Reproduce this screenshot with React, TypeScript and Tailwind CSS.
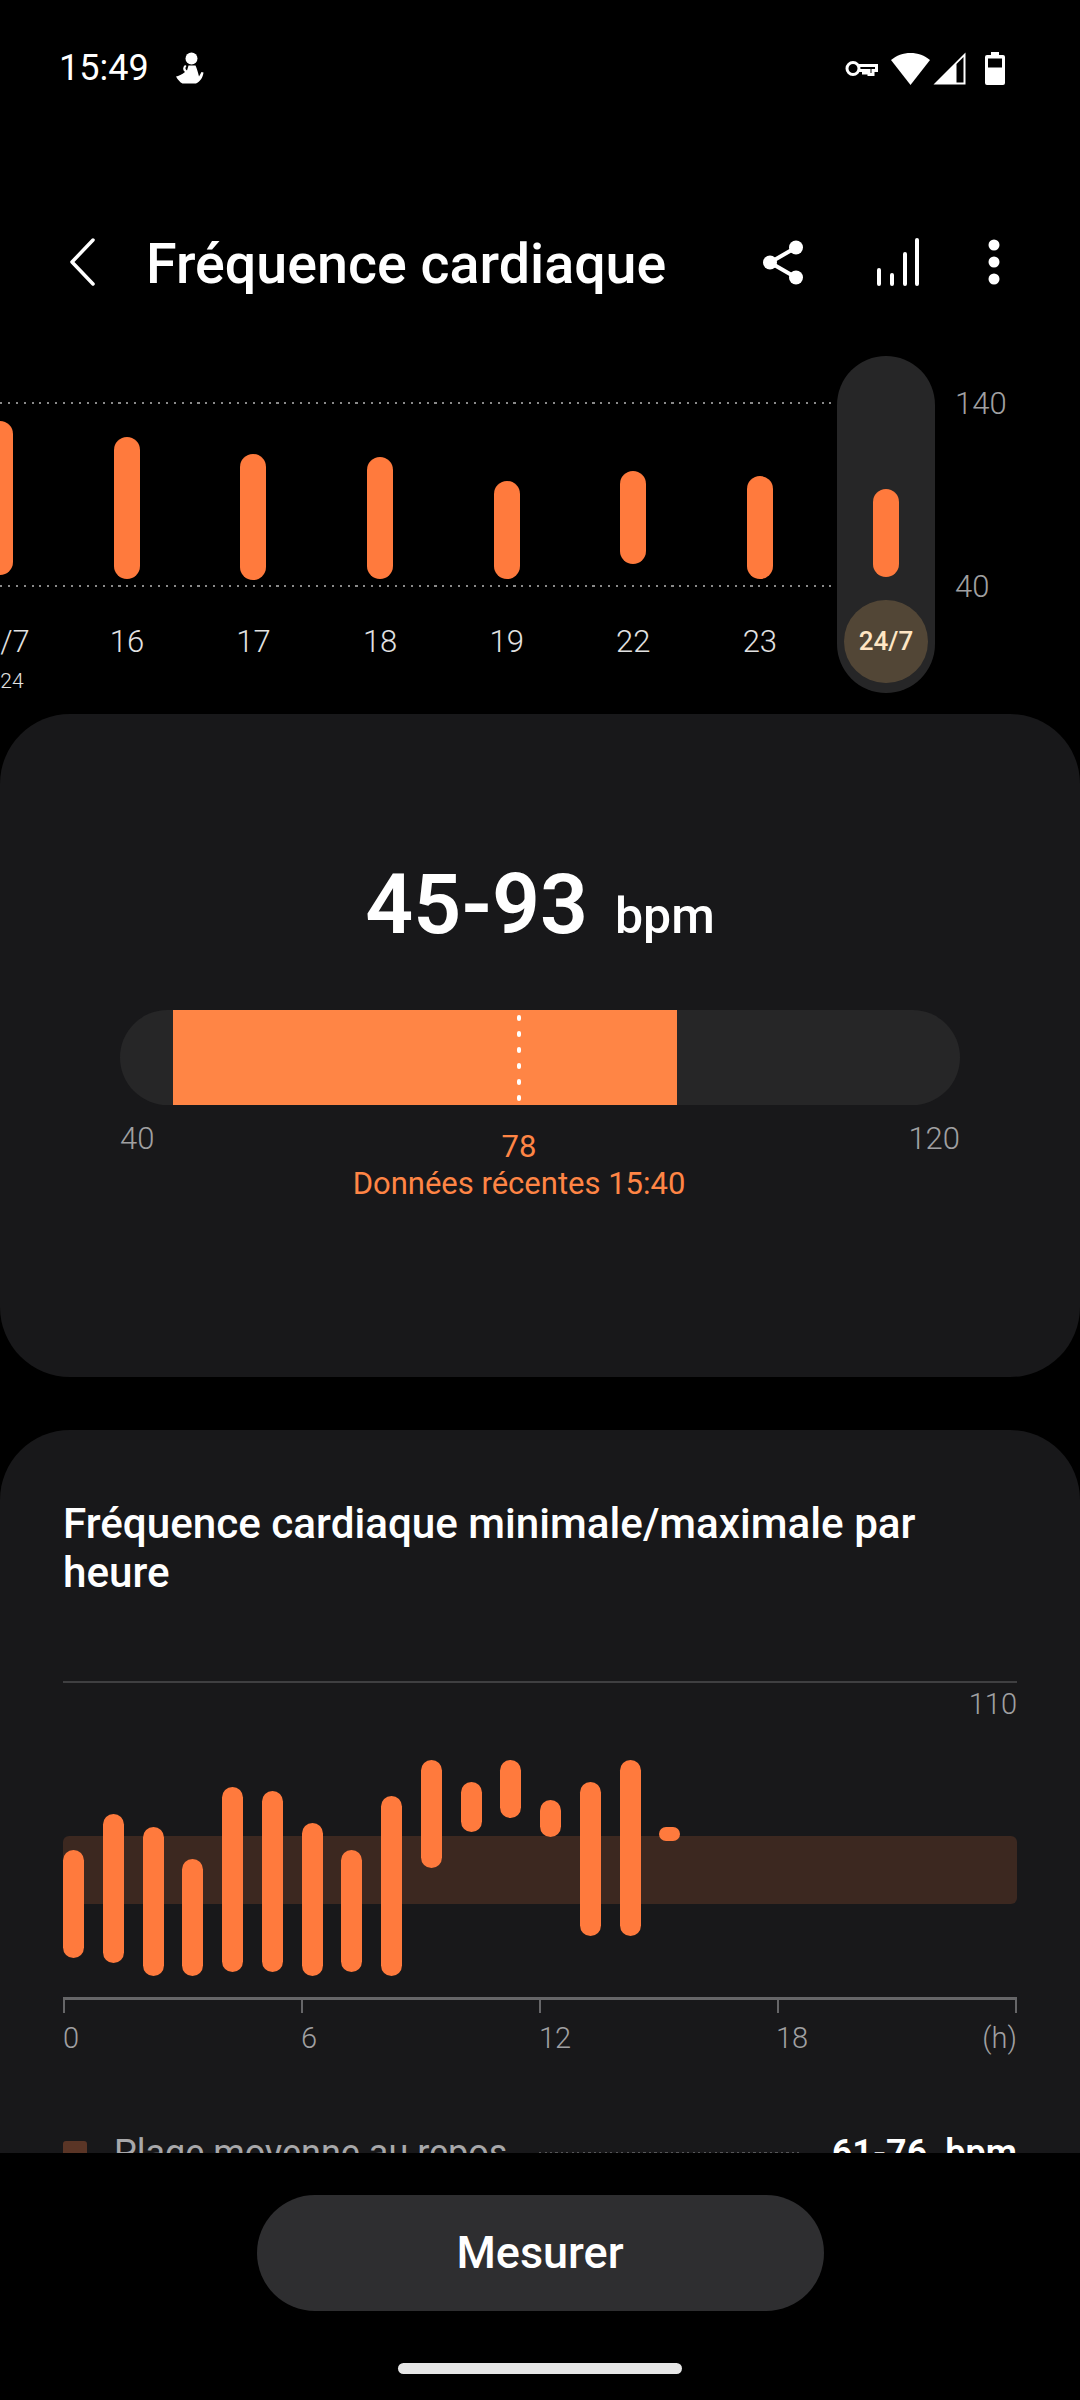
const DAY_BARS = [
  { label: "15/7", sub: "2024", top: 421, bottom: 575 },
  { label: "16", top: 437, bottom: 579 },
  { label: "17", top: 454, bottom: 580 },
  { label: "18", top: 457, bottom: 579 },
  { label: "19", top: 481, bottom: 579 },
  { label: "22", top: 471, bottom: 564 },
  { label: "23", top: 476, bottom: 579 },
  { label: "24/7", top: 489, bottom: 577, active: true },
];

const HOUR_BARS = [
  [1850, 1958],
  [1814, 1963],
  [1827, 1976],
  [1859, 1976],
  [1787, 1972],
  [1791, 1972],
  [1823, 1976],
  [1850, 1972],
  [1796, 1976],
  [1760, 1868],
  [1782, 1832],
  [1760, 1818],
  [1800, 1837],
  [1782, 1936],
  [1760, 1936],
  [1827, 1841],
];

const DAY_CHART_TOP = 356;
const HOUR_CHART_TOP = 1683;

function PersonIcon() {
  return (
    <svg width="28" height="32" viewBox="0 0 28 32" fill="white">
      <circle cx="15.500" cy="6.500" r="6" />
      <path d="M12.500 13.500h7c1.500 3 2.500 7 3.500 11l2.500-4.500 2 .5c-.5 5-3.500 9-7.500 11H6.500c-2.500-1.200-4.500-3.500-6.500-7 2.500-.5 6-2 9-4.500-2.500-2-2.500-4.500 0-7l1.500 1c-1.500 1.500-1.500 3 .5 4.500z" />
    </svg>
  );
}

function KeyIcon() {
  return (
    <svg width="33" height="17" viewBox="0 0 33 17" fill="none" stroke="white" strokeWidth="3">
      <circle cx="8" cy="8.500" r="6" />
      <path d="M14 5.500h17.500v5h-3.500v4h-4v-4h-2.500v2.500h-3v-2.500h-4.500" />
    </svg>
  );
}

function StatusIcons() {
  return (
    <div className="flex items-center">
      <KeyIcon />
      <svg className="ml-[13px]" width="39" height="32" viewBox="0 0 39 32" fill="white">
        <path d="M19.500 0C12 0 5.500 2.500 0 7l19.500 25L39 7C33.500 2.500 27 0 19.500 0z" />
      </svg>
      <svg className="ml-[3px]" width="33" height="33" viewBox="0 0 33 33" fill="none">
        <path d="M32.500 0.500V32.500H0.500z" fill="white" />
        <path d="M23.500 12 30.500 5V30.500H23.500z" fill="black" />
      </svg>
      <svg className="ml-[19px]" width="20" height="33" viewBox="0 0 20 33" fill="white">
        <path d="M6 0h8v3h4a2 2 0 0 1 2 2v26a2 2 0 0 1-2 2H2a2 2 0 0 1-2-2V5a2 2 0 0 1 2-2h4z" />
        <path d="M3 6.500h14v9H3z" fill="black" />
      </svg>
    </div>
  );
}

function HeaderIcons() {
  return (
    <div className="flex items-center">
      <svg width="42" height="45" viewBox="0 0 42 45" fill="white" stroke="white">
        <path d="M35 7.500 9 22.500l26 15" fill="none" strokeWidth="4" />
        <circle cx="35" cy="7.500" r="7" strokeWidth="0" />
        <circle cx="9" cy="22.500" r="7" strokeWidth="0" />
        <circle cx="35" cy="37.500" r="7" strokeWidth="0" />
      </svg>
      <svg className="ml-[73px]" width="44" height="48" viewBox="0 0 44 48" fill="none" stroke="white" strokeWidth="4" strokeLinecap="round">
        <path d="M3 46V32M16 46V37M29 46V16M41 46V2" />
      </svg>
      <svg className="ml-[68px]" width="12" height="46" viewBox="0 0 12 46" fill="white">
        <circle cx="6" cy="6" r="5.500" />
        <circle cx="6" cy="23" r="5.500" />
        <circle cx="6" cy="40" r="5.500" />
      </svg>
    </div>
  );
}

function DayChart() {
  return (
    <div className="relative h-[337px] shrink-0">
      <div className="absolute left-0 top-[46px] h-[2px] w-[837px] bg-[repeating-linear-gradient(90deg,#8a8a8a_0,#8a8a8a_2px,transparent_2px,transparent_7.900px)]" />
      <div className="absolute left-0 top-[229px] h-[2px] w-[837px] bg-[repeating-linear-gradient(90deg,#8a8a8a_0,#8a8a8a_2px,transparent_2px,transparent_7.900px)]" />
      <div className="absolute left-[837px] top-0 flex h-[337px] w-[98px] items-end justify-center rounded-full bg-[#262627] pb-[10px]">
        <div className="flex h-[83px] w-[84px] items-center justify-center rounded-full bg-[#524636] text-[26px] font-medium text-[#ffe6c4]">
          24/7
        </div>
      </div>
      <span className="absolute left-[955px] top-[29px] text-[31px] font-light leading-[38px] text-[#a0a0a2]">140</span>
      <span className="absolute left-[955px] top-[212px] text-[31px] font-light leading-[38px] text-[#a0a0a2]">40</span>
      <div className="relative -ml-[63px] flex w-[1076px]">
        {DAY_BARS.map((bar) => (
          <div key={bar.label} className="flex w-[126.600px] shrink-0 flex-col items-center">
            <div className="h-[267px] w-full">
              <div
                className="mx-auto w-[26px] rounded-full bg-[#ff7a3d]"
                style={{ marginTop: bar.top - DAY_CHART_TOP, height: bar.bottom - bar.top }}
              />
            </div>
            {bar.active ? null : (
              <span className={`whitespace-nowrap text-[31px] font-light leading-[38px] text-[#e2e2e2] ${bar.sub ? "pr-[5px]" : ""}`}>
                {bar.label}
              </span>
            )}
            {bar.sub ? <span className="mt-[7px] text-[21px] font-light leading-[26px] text-[#e2e2e2]">{bar.sub}</span> : null}
          </div>
        ))}
      </div>
    </div>
  );
}

function SummaryCard() {
  return (
    <section className="h-[663px] rounded-[70px] bg-[#18181a] px-[120px] pt-[145px]">
      <div className="flex items-baseline justify-center text-white">
        <span className="text-[84px] font-semibold leading-[92px]">45-93</span>
        <span className="ml-[27px] text-[50px] font-medium leading-[60px]">bpm</span>
      </div>
      <div className="relative mt-[59px] h-[95px] overflow-hidden rounded-full bg-[#262627]">
        <div className="ml-[53px] h-full w-[504px] bg-[#ff8545]" />
        <div
          className="absolute top-[5px] flex -translate-x-1/2 flex-col gap-[10px]"
          style={{ left: ((78 - 40) / 80) * 840 }}
        >
          {[0, 1, 2, 3, 4, 5].map((dot) => (
            <div key={dot} className="h-[6px] w-[4px] rounded-full bg-white" />
          ))}
        </div>
      </div>
      <div className="relative mt-[15px] flex justify-between text-[31px] font-light leading-[38px] text-[#a0a0a2]">
        <span>40</span>
        <span>120</span>
        <div
          className="absolute top-[8px] flex -translate-x-1/2 flex-col items-center whitespace-nowrap font-normal leading-[37px] text-[#ff8545]"
          style={{ left: ((78 - 40) / 80) * 840 }}
        >
          <span>78</span>
          <span>Données récentes 15:40</span>
        </div>
      </div>
    </section>
  );
}

function HourChart() {
  return (
    <div className="relative mt-[84px] h-[330px] border-t-2 border-[#3f3f41]">
      <span className="absolute right-0 top-[3px] text-[29px] font-light leading-[36px] text-[#a0a0a2]">110</span>
      <div className="absolute inset-x-0 top-[153px] h-[68px] rounded-[6px] bg-[#3c2820]" />
      <div className="relative flex gap-[18.750px]">
        {HOUR_BARS.map(([top, bottom]) => (
          <div
            key={`${top}-${bottom}`}
            className="w-[21px] shrink-0 rounded-full bg-[#ff7a3d]"
            style={{ marginTop: top - HOUR_CHART_TOP, height: bottom - top }}
          />
        ))}
      </div>
      <div className="absolute inset-x-0 top-[314px] flex h-[16px] justify-between border-t-[3px] border-[#666668]">
        {[0, 1, 2, 3, 4].map((tick) => (
          <div key={tick} className="h-[13px] w-[2px] bg-[#666668]" />
        ))}
      </div>
    </div>
  );
}

function HourlyCard() {
  return (
    <section className="rounded-t-[70px] bg-[#18181a] px-[63px] pb-[200px] pt-[69px]">
      <h2 className="text-[42.200px] font-medium leading-[49px] text-white">
        Fréquence cardiaque minimale/maximale par heure
      </h2>
      <HourChart />
      <div className="mt-[9px] flex text-[29px] font-light leading-[36px] text-[#a0a0a2]">
        <span className="w-[238px]">0</span>
        <span className="w-[238px]">6</span>
        <span className="w-[237px]">12</span>
        <span className="flex-1">18</span>
        <span>(h)</span>
      </div>
      <div className="mt-[75px] flex items-center">
        <div className="h-[24px] w-[24px] rounded-[3px] bg-[#5a3526]" />
        <span className="ml-[27px] text-[36px] leading-[44px] text-[#a8a8aa]">Plage moyenne au repos</span>
        <div className="ml-[32px] h-[2px] w-[263px] bg-[repeating-linear-gradient(90deg,#555557_0,#555557_2px,transparent_2px,transparent_5.500px)]" />
        <div className="ml-auto flex gap-[18px] text-[36px] font-semibold leading-[44px] text-white">
          <span>61-76</span>
          <span>bpm</span>
        </div>
      </div>
    </section>
  );
}

export default function App() {
  return (
    <div className="flex h-[2400px] w-[1080px] flex-col overflow-hidden bg-black font-['Roboto',sans-serif]">
      <div className="flex h-[85px] shrink-0 items-end justify-between pl-[59px] pr-[75px]">
        <div className="flex items-center">
          <span className="text-[36px] leading-[34px] text-white">15:49</span>
          <span className="ml-[27px]">
            <PersonIcon />
          </span>
        </div>
        <StatusIcons />
      </div>

      <div className="mt-[137px] flex h-[80px] shrink-0 items-center pl-[69px] pr-[80px]">
        <svg width="26" height="48" viewBox="0 0 26 48" fill="none" stroke="white" strokeWidth="3.500" strokeLinecap="round" strokeLinejoin="round">
          <path d="M24 2 3 24l21 22" />
        </svg>
        <h1 className="ml-[51px] mt-[4px] text-[55.600px] font-medium leading-[64px] text-white">Fréquence cardiaque</h1>
        <div className="ml-auto">
          <HeaderIcons />
        </div>
      </div>

      <div className="mt-[54px]">
        <DayChart />
      </div>

      <div className="mt-[21px] h-[1439px] shrink-0 overflow-hidden">
        <SummaryCard />
        <div className="mt-[53px]">
          <HourlyCard />
        </div>
      </div>

      <div className="flex flex-1 flex-col items-center">
        <button type="button" className="mt-[42px] h-[116px] w-[567px] rounded-full bg-[#2e2e30] text-[45px] font-medium text-white">
          Mesurer
        </button>
        <div className="mt-[52px] h-[11px] w-[284px] rounded-full bg-[#e6e6e6]" />
      </div>
    </div>
  );
}
